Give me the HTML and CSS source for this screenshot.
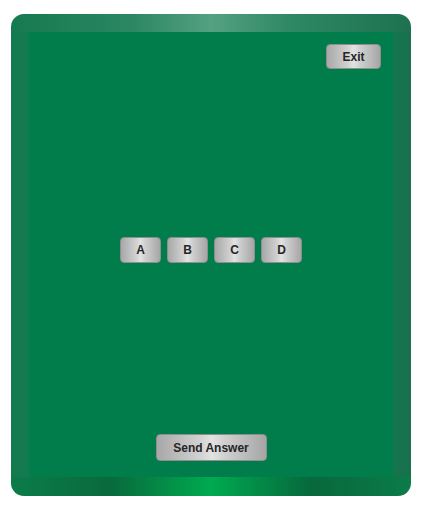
FILE: index.html
```html
<!DOCTYPE html>
<html>
<head>
<meta charset="utf-8">
<link rel="stylesheet" href="styles.css">
</head>
<body>
<div class="frame">
  <div class="panel">
    <div class="top"><button class="btn exit">Exit</button></div>
    <div class="middle">
      <button class="btn opt">A</button>
      <button class="btn opt">B</button>
      <button class="btn opt">C</button>
      <button class="btn opt">D</button>
    </div>
    <div class="bottom"><button class="btn send">Send Answer</button></div>
  </div>
</div>
</body>
</html>
```
FILE: styles.css
```css
html, body { margin: 0; padding: 0; background: #fff; }
body { font-family: "Liberation Sans", Arial, sans-serif; }
.frame {
  margin: 14px 0 0 11px;
  width: 400px;
  height: 482px;
  box-sizing: border-box;
  padding: 18px 18px 19px 18px;
  border-radius: 13px;
  background-color: #0f7c4e;
  background-image:
    linear-gradient(to right, #167a50 0%, #2b8761 30%, #54a180 50%, #2e8863 70%, #1d7150 100%),
    linear-gradient(to right, #0c7b4a 0%, #086a3d 25%, #00aa50 50%, #07683c 75%, #0c7b4a 100%),
    linear-gradient(to right, #147a4f 0%, #0f7c4e 10%, #0f7c4e 90%, #18704d 100%);
  background-size: 100% 18px, 100% 19px, 100% 100%;
  background-position: top, bottom, center;
  background-repeat: no-repeat;
}
.panel {
  height: 445px;
  background: #017c4b;
  display: flex;
  flex-direction: column;
}
.top { display: flex; justify-content: flex-end; padding: 12px 12px 0 0; }
.middle {
  flex: 1;
  display: flex;
  justify-content: center;
  align-items: center;
  gap: 6px;
  padding-bottom: 4px;
}
.bottom { display: flex; justify-content: center; padding-bottom: 16px; }
.btn {
  font-family: "Liberation Sans", Arial, sans-serif;
  font-weight: bold;
  font-size: 12px;
  color: #262626;
  border: 1px solid #8e8e8e;
  border-radius: 4px;
  background: linear-gradient(to right, #a8a8a8 0%, #d2d2d2 40%, #e2e2e2 50%, #d0d0d0 62%, #a6a6a6 100%);
  padding: 0;
  margin: 0;
  box-sizing: border-box;
}
.exit { width: 55px; height: 25px; }
.opt { width: 41px; height: 26px; }
.send { width: 111px; height: 27px; }
```
